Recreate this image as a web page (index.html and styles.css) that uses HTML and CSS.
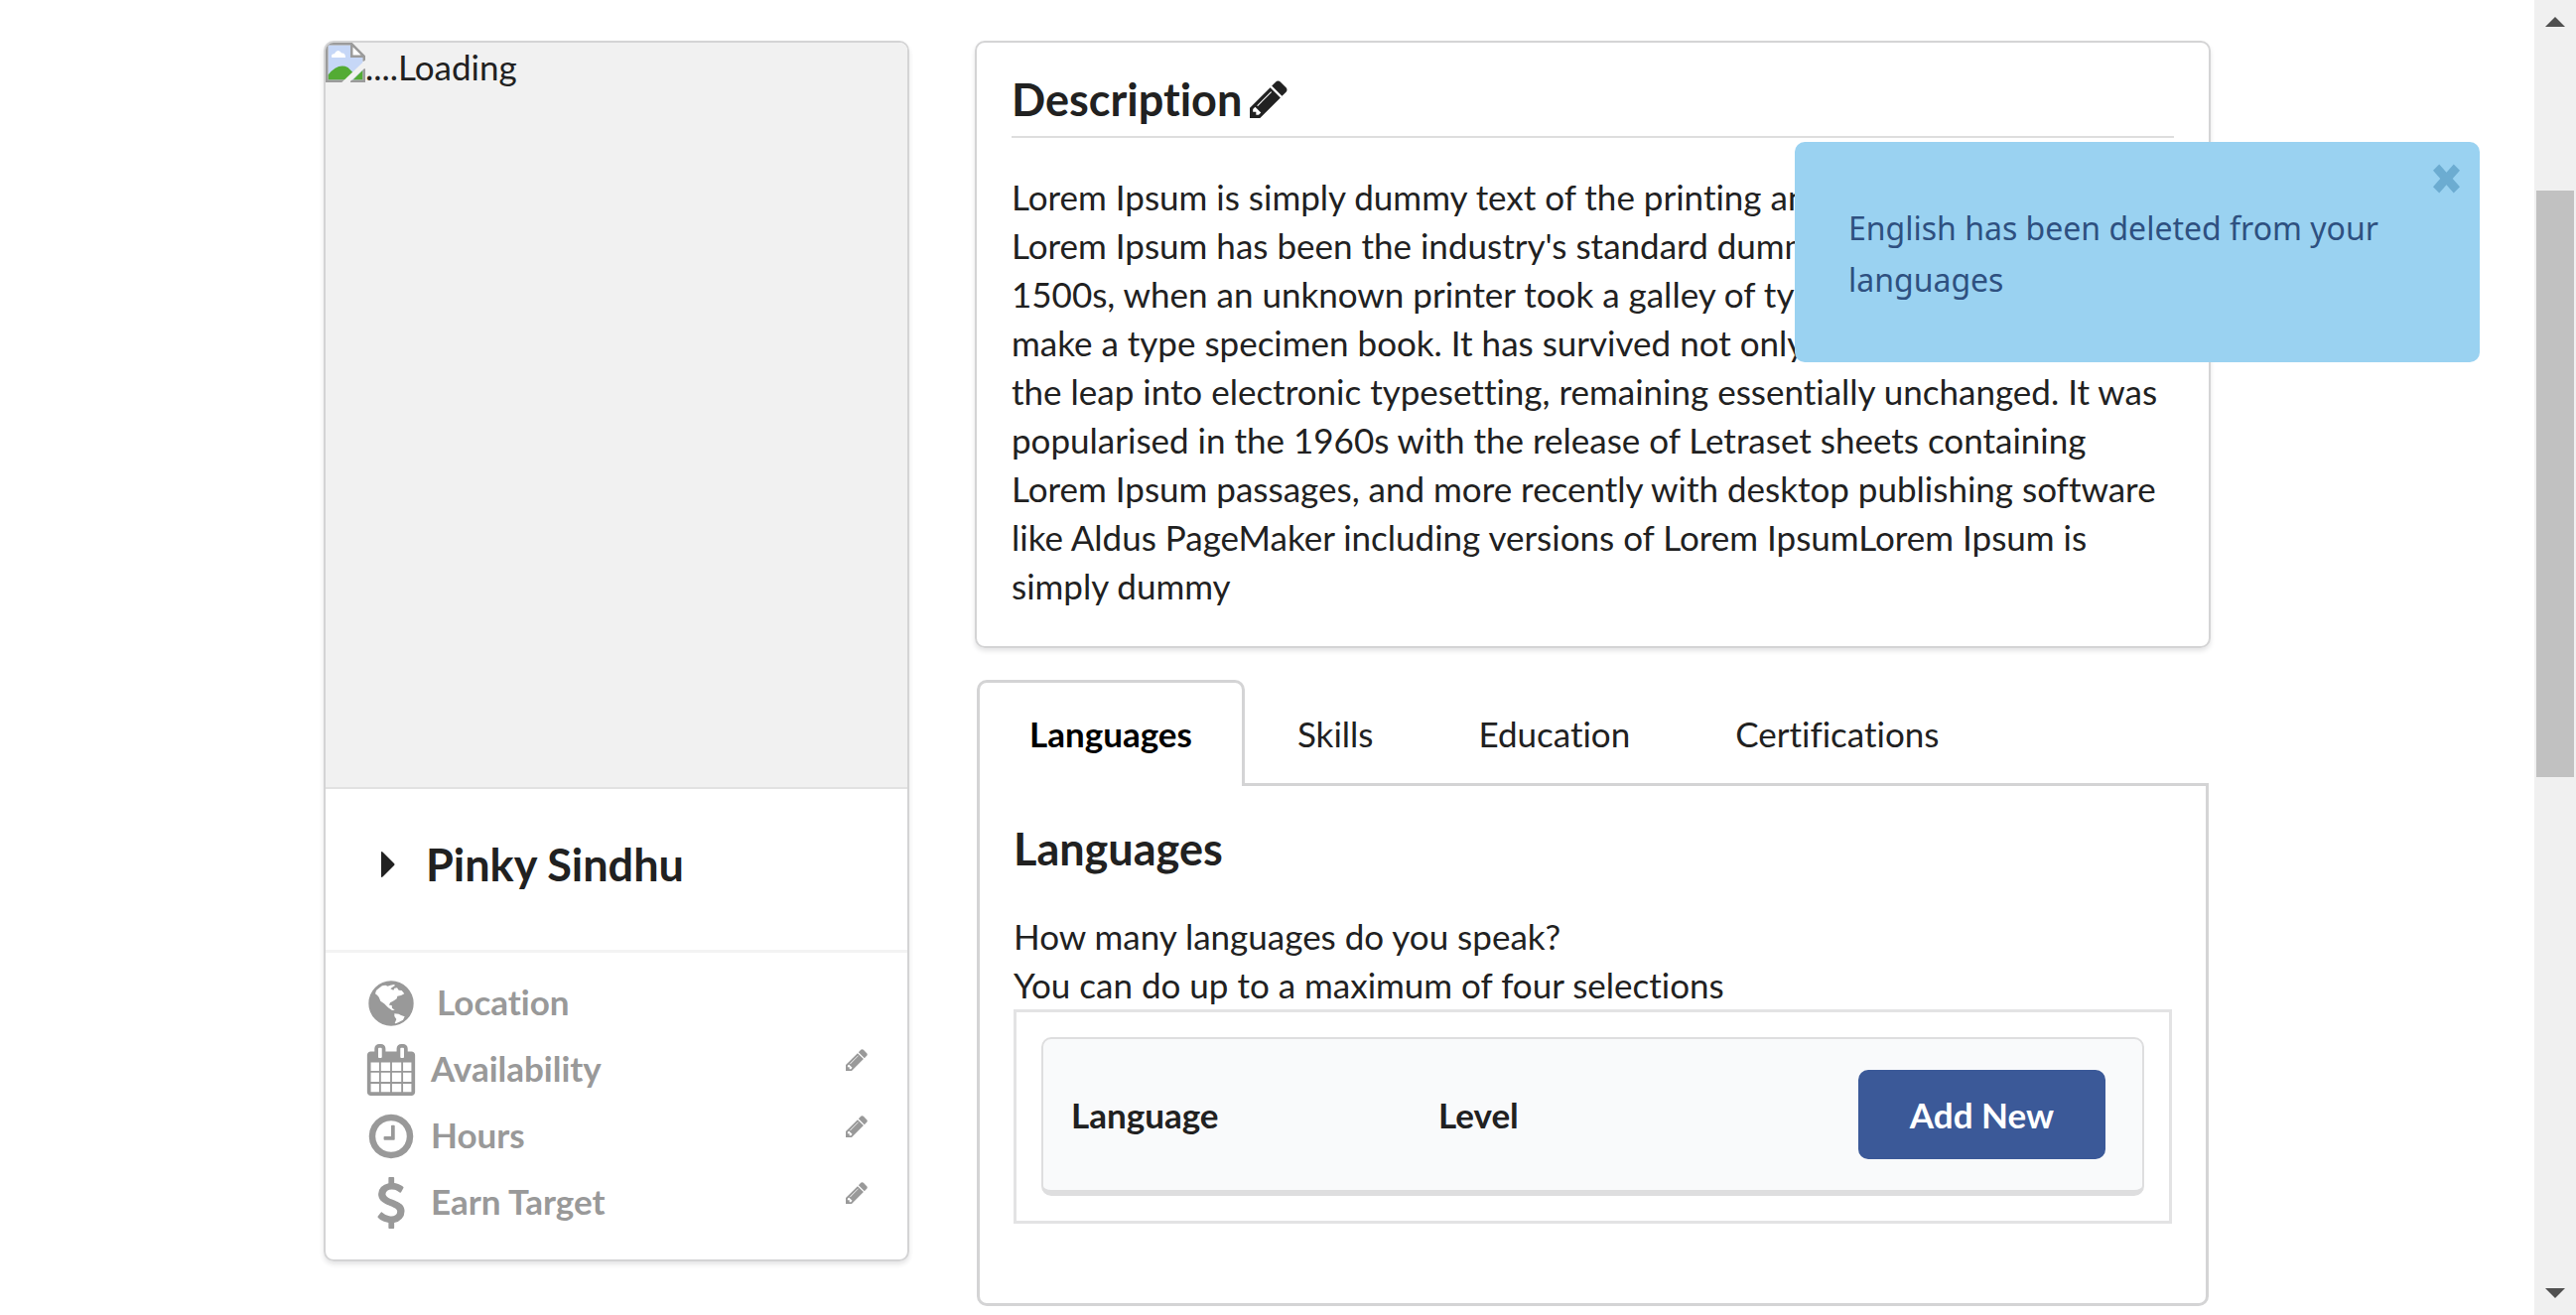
FILE: index.html
```html
<!DOCTYPE html>
<html lang="en">
<head>
<meta charset="utf-8">
<title>Profile</title>
<link rel="stylesheet" href="styles.css">
</head>
<body>
<svg class="sprite" aria-hidden="true">
  <symbol id="pencil" viewBox="128 128 1536 1536"><path d="M491 1536l91-91-235-235-91 91v107h128v128h107zm523-928q0-22-22-22-10 0-17 7l-542 542q-7 7-7 17 0 22 22 22 10 0 17-7l542-542q7-7 7-17zm-54-192l416 416-832 832h-416v-416zm683 96q0 53-37 90l-166 166-416-416 166-165q36-38 90-38 53 0 91 38l235 234q37 39 37 91z"/></symbol>
  <symbol id="clock" viewBox="0 0 1792 1792"><path d="M1024 544v448q0 14-9 23t-23 9h-320q-14 0-23-9t-9-23v-64q0-14 9-23t23-9h224v-352q0-14 9-23t23-9h64q14 0 23 9t9 23zm416 352q0-148-73-273t-198-198-273-73-273 73-198 198-73 273 73 273 198 198 273 73 273-73 198-198 73-273zm224 0q0 209-103 385.500t-279.500 279.500-385.500 103-385.500-103-279.500-279.500-103-385.500 103-385.500 279.500-279.500 385.500-103 385.500 103 279.500 279.500 103 385.500z"/></symbol>
  <symbol id="calendar" viewBox="0 0 1792 1792"><path fill-rule="evenodd" d="M192 1664h288v-288h-288zM544 1664h320v-288h-320zM192 1312h288v-320h-288zM544 1312h320v-320h-320zM192 928h288v-288h-288zM928 1664h320v-288h-320zM544 928h320v-288h-320zM1312 1664h288v-288h-288zM928 1312h320v-320h-320zM576 448v-288q0-32-32-32h-64q-32 0-32 32v288q0 32 32 32h64q32 0 32-32zM1312 1312h288v-320h-288zM928 928h320v-288h-320zM1312 928h288v-288h-288zM1344 448v-288q0-32-32-32h-64q-32 0-32 32v288q0 32 32 32h64q32 0 32-32zM1728 384v1280q0 52-38 90t-90 38h-1408q-52 0-90-38t-38-90v-1280q0-52 38-90t90-38h128v-96q0-66 47-113t113-47h64q66 0 113 47t47 113v96h384v-96q0-66 47-113t113-47h64q66 0 113 47t47 113v96h128q52 0 90 38t38 90z"/></symbol>
  <symbol id="dollar" viewBox="0 0 1792 1792"><path d="M1362 1185q0 153-99.500 263.500t-258.500 136.500v175q0 14-9 23t-23 9h-135q-13 0-22.500-9.500t-9.500-22.500v-175q-66-9-127.500-31t-101.500-44.500-74-48-46.500-37.500-17.500-18q-17-21-2-41l103-135q7-10 23-12 15-2 24 9l2 2q113 99 243 125 37 8 74 8 81 0 142.500-43t61.500-122q0-28-15-53t-33.500-42-58.500-37.500-66-32-80-32.500q-39-16-61.500-25t-61.500-26.500-62.500-31-56.500-35.500-53.500-42.500-43.500-49-35.500-58-21-66.500-8.500-78q0-138 98-242t255-134v-180q0-13 9.500-22.500t22.500-9.500h135q14 0 23 9t9 23v176q57 6 110.500 23t87 33.500 63.500 37.500 39 29 15 14q17 18 5 38l-81 146q-8 15-23 16-14 3-27-7-3-3-14.500-12t-39-26.500-58.500-32-74.500-26-85.500-11.500q-95 0-155 43t-60 111q0 26 8.500 48t29.500 41.500 39.500 33 56 31 60.500 27 70 27.500q53 20 81 31.500t76 35 75.500 42.500 62 50 53 63.500 31.500 76.500 13 94z"/></symbol>
  <symbol id="globe" viewBox="24 17 156 156"><path fill-rule="evenodd" d="M102 27a68 68 0 1 1 0 136a68 68 0 1 1 0-136zM54 66l3-10 8-7 10-7 10-2 7 3 8-3 11-2 3 3-8 5-6 5 9 4 3-6 8-1 5 7 9 1 8 10-10 5-11 2-2 8-11 7-9 5-3 7 8 1 1 8 8 6-8 1-12-8-12-12-11-8-5-12-5-6zM112 126l13 1 7 4 11 4-5 10-13 7-9 4-3-1 5-12-6-9z"/></symbol>
</svg>
<div class="page">
  <main class="content">
    <section class="card profile">
      <div class="photo">
        <svg class="broken" viewBox="0 0 16 16" aria-hidden="true"><path fill="#c6d7f7" d="M1 1h9l5 5v9H1z"/><path fill="#fff" d="M2.500 6q-.5-1.500 1-1.500Q5 2 6.500 4.200 8 4 8 6z"/><path fill="#53ab34" d="M1 15v-2q4-5 8-3l2 2-3 3zM11 15l4-4v4z"/><path fill="#fff" d="M10.500 1v4.500H15z"/><path fill="none" stroke="#9b9b9b" d="M7.500 15.500h-7V.500h10l5 5v2M10.500.500v5h5M15.500 10.500v5H10"/><path fill="#f1f1f1" d="M16 7v3l-6.500 6H6.500z"/></svg><span>....Loading</span>
      </div>
      <details class="name"><summary><svg class="caret" viewBox="0 0 14 26" aria-hidden="true"><path d="M0 1q0-2 2 0l11 11q1 1 0 2L2 25q-2 2-2 0z"/></svg>Pinky Sindhu</summary></details>
      <ul class="facts">
        <li><svg class="icon"><use href="#globe"/></svg><span class="spaced">Location</span></li>
        <li><svg class="icon"><use href="#calendar"/></svg><span>Availability</span><button class="edit" aria-label="Edit availability"><svg><use href="#pencil"/></svg></button></li>
        <li><svg class="icon"><use href="#clock"/></svg><span>Hours</span><button class="edit" aria-label="Edit hours"><svg><use href="#pencil"/></svg></button></li>
        <li><svg class="icon"><use href="#dollar"/></svg><span>Earn Target</span><button class="edit" aria-label="Edit earn target"><svg><use href="#pencil"/></svg></button></li>
      </ul>
    </section>
    <div class="column">
      <section class="card description">
        <header><h2>Description</h2><button class="edit large" aria-label="Edit description"><svg><use href="#pencil"/></svg></button></header>
        <p>Lorem Ipsum is simply dummy text of the printing and typesetting industry. Lorem Ipsum has been the industry's standard dummy text ever since the 1500s, when an unknown printer took a galley of type and scrambled it to make a type specimen book. It has survived not only five centuries, but also the leap into electronic typesetting, remaining essentially unchanged. It was popularised in the 1960s with the release of Letraset sheets containing Lorem Ipsum passages, and more recently with desktop publishing software like Aldus PageMaker including versions of Lorem IpsumLorem Ipsum is simply dummy</p>
      </section>
      <section class="tabbed">
        <nav class="tabs">
          <a class="tab active" href="#languages">Languages</a>
          <a class="tab" href="#skills">Skills</a>
          <a class="tab" href="#education">Education</a>
          <a class="tab" href="#certifications">Certifications</a>
        </nav>
        <div class="panel" id="languages">
          <h2>Languages</h2>
          <p>How many languages do you speak?<br>You can do up to a maximum of four selections</p>
          <div class="frame">
            <table class="table">
              <thead><tr><th class="third">Language</th><th>Level</th><th class="action"><button class="add">Add New</button></th></tr></thead>
            </table>
          </div>
        </div>
      </section>
    </div>
  </main>
  <div class="scrollbar" aria-hidden="true">
    <svg viewBox="0 0 20 10"><path d="M0 10L10 0l10 10z"/></svg>
    <div class="track"><div class="thumb"></div></div>
    <svg viewBox="0 0 20 10"><path d="M0 0h20L10 10z"/></svg>
  </div>
  <div class="toast" role="status">
    <span>English has been deleted from your languages</span>
    <button class="close" aria-label="Close"><svg viewBox="0 0 26 28"><path d="M6 0l7 8 7-8 6 6-7 8 7 8-6 6-7-8-7 8-6-6 7-8-7-8z"/></svg></button>
  </div>
</div>
</body>
</html>
```
FILE: styles.css
```css
* { box-sizing: border-box; }
body { margin: 0; background: #fff; color: #212121; font: 35px/49px Lato, "Open Sans", sans-serif; font-variant-ligatures: none; }
h2, p, ul { margin: 0; padding: 0; }
h2 { font-size: 45px; line-height: 58px; font-weight: 700; }
button { border: 0; padding: 0; background: none; color: inherit; font: inherit; cursor: pointer; }
svg { display: block; fill: currentColor; }
.sprite { position: absolute; width: 0; height: 0; }

.page { position: relative; display: flex; min-height: 100vh; }
.content {
  flex: 1;
  display: grid;
  grid-template-columns: 590fr 1245fr;
  gap: 66px;
  align-items: start;
  max-width: 1901px;
  margin: 0 auto;
  padding-top: 41px;
}
.card { border: 2px solid #d4d4d5; border-radius: 10px; box-shadow: 0 3px 5px #e4e4e5; }

.profile { overflow: hidden; }
.photo { display: flex; height: 752px; background: #f1f1f1; border-bottom: 2px solid #e2e2e2; }
.broken { width: 40px; height: 40px; }
.name { padding: 47px 56px; height: 165px; border-bottom: 3px solid #f3f3f3; }
.name summary { display: flex; align-items: center; gap: 31px; list-style: none; font-size: 45px; line-height: 58px; font-weight: 700; }
.caret { width: 14px; height: 26px; }
.facts { list-style: none; padding: 17px 40px 24px; color: #999; font-weight: 700; }
.facts li { display: flex; align-items: center; gap: 14px; height: 67px; }
.facts span { padding-bottom: 3px; }
.icon { width: 52px; height: 52px; }
.spaced { padding-left: 6px; }
.edit { width: 22px; height: 22px; }
.edit svg { width: 100%; height: 100%; }
.facts .edit { margin: 0 0 20px auto; }
.edit.large { width: 38px; height: 38px; }

.description { padding: 28px 35px 36px; }
.description header { display: flex; align-items: center; gap: 8px; padding-bottom: 8px; border-bottom: 2px solid #dedede; margin-bottom: 35px; }
.tabbed { margin: 32px 2px 0; }
.tabs { display: flex; border-bottom: 3px solid #d4d4d5; }
.tab { padding: 27px 50px 25px; border: 3px solid transparent; border-bottom: 0; color: #212121; text-decoration: none; }
.tab.active { margin-bottom: -3px; border-color: #d4d4d5; border-radius: 10px 10px 0 0; background: #fff; color: #000; font-weight: 700; }
.panel { padding: 34px 34px 80px; border: 3px solid #d4d4d5; border-top: 0; border-radius: 0 0 10px 10px; }
.panel p { margin-top: 35px; }
.frame { padding: 25px; border: 3px solid #e3e3e4; }
.table { width: 100%; border: 2px solid #dededf; border-bottom: 6px solid #dededf; border-radius: 10px; border-spacing: 0; background: #f9fafb; }
.table th { padding: 31px 28px; text-align: left; font-weight: 700; }
.table .third { width: 370px; }
.table .action { padding-right: 37px; text-align: right; }
.add { padding: 20px 52px; border-radius: 10px; background: #3b5998; color: #fff; font-weight: 700; line-height: 50px; }

.toast {
  position: absolute;
  top: 143px;
  right: 97px;
  display: flex;
  width: 690px;
  padding: 61px 50px 57px 54px;
  border-radius: 10px;
  background: #9ad2f1;
  color: #2e5080;
  font: 32px/52px "Noto Sans", "Open Sans", sans-serif;
}
.close { position: absolute; top: 22px; right: 20px; color: #6cacd1; }
.close svg { width: 27px; height: 30px; }

.scrollbar { display: flex; flex-direction: column; align-items: center; width: 42px; padding: 17px 0; background: #f0f0f0; color: #505050; }
.scrollbar svg { width: 20px; height: 10px; }
.track { flex: 1; align-self: stretch; display: grid; grid-template-rows: 591fr 515fr; padding: 165px 2px 0; }
.thumb { background: #c1c1c1; }
```
